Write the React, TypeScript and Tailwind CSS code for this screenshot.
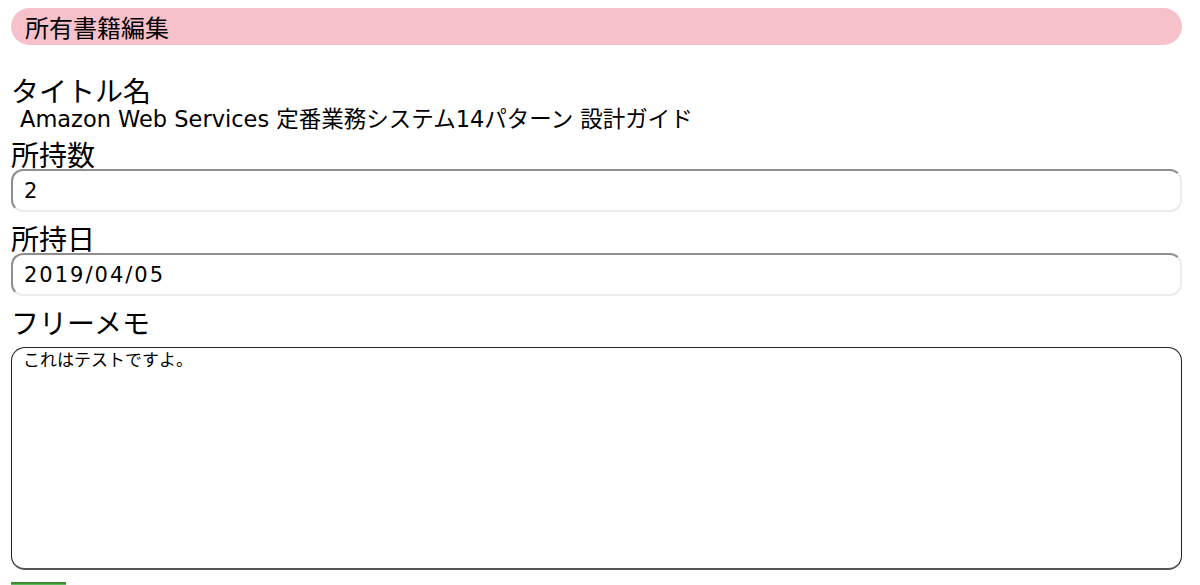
import React from "react";

const font = {
  fontFamily: '"Noto Sans CJK JP", "Noto Sans", sans-serif',
};

const latin = {
  fontFamily: '"DejaVu Sans", "Noto Sans CJK JP", sans-serif',
};

const Label = ({ children, top }: { children: React.ReactNode; top: string }) => (
  <div className={`${top} text-[28px] leading-[30px] text-black`}>{children}</div>
);

const inputCls =
  "h-[43px] w-full rounded-[12px] border-2 border-t-[#8f8f8f] border-l-[#8f8f8f] border-b-[#ececec] border-r-[#ececec] px-[11px] text-[21px] tracking-[2px] text-black outline-none";

export default function App() {
  return (
    <div className="bg-white h-[585px] overflow-hidden pt-2 pl-[11px] pr-[18px]" style={font}>
      {/* page heading */}
      <div className="h-[37px] rounded-full bg-[#f6c1cb] pl-[14px] flex items-center text-[24px] text-black">
        所有書籍編集
      </div>

      <form className="mt-[24px] flex flex-col">
        <Label top="pt-[6px]">タイトル名</Label>
        <div className="pl-[9px] text-[22.5px] leading-[28px] text-black" style={latin}>
          Amazon Web Services 定番業務システム14パターン 設計ガイド
        </div>

        <Label top="pt-[6px]">所持数</Label>
        <input type="text" defaultValue="2" className={inputCls} style={latin} />

        <Label top="pt-[11px]">所持日</Label>
        <input type="text" defaultValue="2019/04/05" className={inputCls} style={latin} />

        <Label top="pt-[11px]">フリーメモ</Label>
        <textarea
          defaultValue="これはテストですよ。"
          className="mt-[10px] h-[223px] w-full resize-none rounded-[14px] border border-[#222] border-b-2 border-b-[#555] px-[11px] py-0 text-[17px] leading-[22px] text-black outline-none"
        />

        <button
          type="submit"
          className="mt-[12px] h-[36px] w-[55px] border-t-2 border-[#3f8f2f] bg-[#5cb85c] text-white text-[15px]"
        >
          更新
        </button>
      </form>
    </div>
  );
}
